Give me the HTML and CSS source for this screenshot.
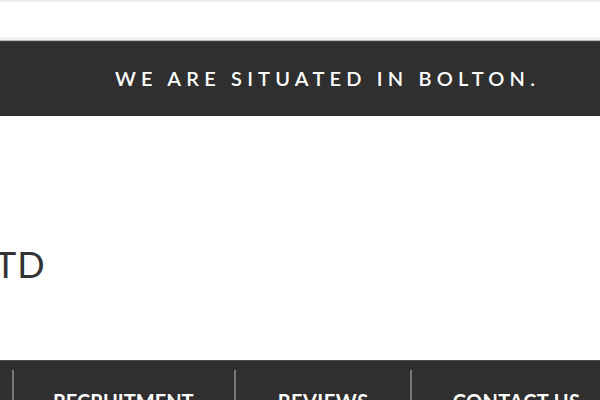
FILE: index.html
```html
<!DOCTYPE html>
<html>
<head>
<meta charset="utf-8">
<link rel="stylesheet" href="styles.css">
</head>
<body>
<div class="topbar"></div>
<div class="toolbar"></div>
<div class="strip"></div>
<header class="banner">
  <p class="tagline">WE ARE SITUATED IN BOLTON.</p>
</header>
<main class="brand">
  <h1 class="company">LTD</h1>
</main>
<nav class="nav">
  <ul class="menu">
    <li class="item">RECRUITMENT</li>
    <li class="item item-wide">REVIEWS</li>
    <li class="item item-last">CONTACT US</li>
  </ul>
</nav>
</body>
</html>
```
FILE: styles.css
```css
html, body {
  margin: 0;
  padding: 0;
  overflow: hidden;
  background: #ffffff;
}
body {
  width: 600px;
  height: 400px;
  font-family: "Lato", "Open Sans", sans-serif;
}
.topbar {
  height: 2px;
  background: #ececec;
}
.toolbar {
  height: 35px;
  background: #ffffff;
}
.strip {
  height: 3px;
  background: #f1f1f1;
  border-bottom: 1px solid #b9b9b9;
}
.banner {
  height: 75px;
  background: #2f2f2f;
  border-top: 1px solid #3c3c3c;
  display: flex;
  align-items: center;
  box-sizing: border-box;
}
.tagline {
  margin: 0 0 0 115px;
  color: #ffffff;
  font-size: 20px;
  font-weight: 600;
  letter-spacing: 5.2px;
  white-space: nowrap;
  line-height: 1;
  padding-bottom: 3px;
}
.brand {
  height: 244px;
  display: flex;
  align-items: flex-start;
}
.company {
  margin: 130px 0 0 -21px;
  font-size: 36px;
  font-weight: 400;
  color: #333333;
  line-height: 1;
  letter-spacing: 1px;
}
.nav {
  height: 40px;
  background: #2f2f2f;
  border-top: 1px solid #4a4a4a;
  box-sizing: border-box;
}
.menu {
  list-style: none;
  margin: 0;
  padding: 9px 0 0 12px;
  display: flex;
  white-space: nowrap;
}
.item {
  border-left: 2px solid #767676;
  padding: 21px 40px 0 40px;
  color: #ffffff;
  font-size: 20px;
  font-weight: 700;
  line-height: 1;
  height: 40px;
  box-sizing: border-box;
}
.item:first-child {
  padding-left: 39px;
}
.item-wide {
  padding: 21px 41px 0 42px;
  letter-spacing: 0.5px;
}
.item-last {
  padding-left: 41px;
  letter-spacing: 0.4px;
}
```
